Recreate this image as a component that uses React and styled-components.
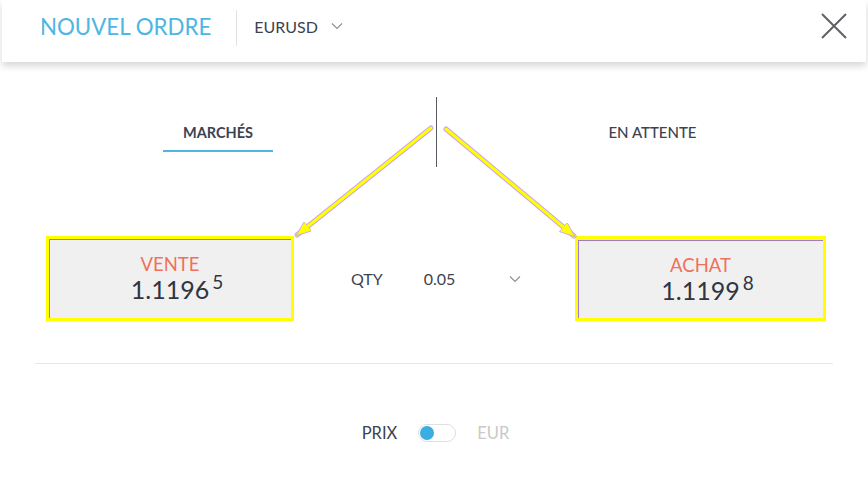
import styled, { createGlobalStyle } from "styled-components";

const GlobalStyle = createGlobalStyle`
  body {
    margin: 0;
    background: #ffffff;
    font-family: Lato, "Open Sans", sans-serif;
  }
`

const Page = styled.div`
  position: relative;
  width: 868px;
  height: 500px;
  overflow: hidden;
  background: #ffffff;
`

const Header = styled.div`
  display: flex;
  align-items: center;
  height: 62px;
  box-sizing: border-box;
  padding: 0 0 10px 38px;
  margin: 0 2px;
  background: #ffffff;
  box-shadow: 0 4px 7px rgba(0, 0, 0, 0.16);
  position: relative;
  z-index: 1;
`

const Title = styled.div`
  font-size: 22.3px;
  color: #4db6e2;
`

const HeaderSep = styled.div`
  width: 1px;
  height: 36px;
  background: #e2e2e2;
  margin: 4px 17px 0 25px;
`

const Symbol = styled.div`
  display: flex;
  align-items: center;
  gap: 13px;
  font-size: 16px;
  color: #3d4250;
`

const CloseBtn = styled.div`
  margin-left: auto;
  margin-right: 18px;
  display: flex;
`

const Tabs = styled.div`
  display: grid;
  grid-template-columns: 436px 1px 1fr;
  height: 70px;
  margin-top: 35px;
`

const TabCol = styled.div`
  display: flex;
  justify-content: center;
  align-items: flex-start;
  padding-top: 27px;
`

const Tab = styled.div`
  width: 110px;
  text-align: center;
  font-size: ${(p) => (p.$active ? 14.5 : 15)}px;
  line-height: 17px;
  font-weight: ${(p) => (p.$active ? 700 : 500)};
  color: #3d4250;
  padding-bottom: 9px;
  border-bottom: 2px solid ${(p) => (p.$active ? "#4db6e2" : "transparent")};
`

const TabDivider = styled.div`
  background: #555a63;
`

const TradeRow = styled.div`
  display: grid;
  grid-template-columns: 248px 1fr 251px;
  margin-top: 69px;
  padding: 0 42px 0 46px;
`

const PriceBox = styled.div`
  height: 85px;
  box-sizing: border-box;
  border: 3px solid #ffff00;
  border-top-width: ${(p) => p.$top}px;
  background: #f0f0f0;
  box-shadow: inset 1px 1px 0 #9d7bdc;
  display: flex;
  flex-direction: column;
  align-items: center;
  justify-content: center;
`

const Side = styled.div`
  font-size: 18.5px;
  line-height: 21px;
  color: #f0715a;
`

const Price = styled.div`
  position: relative;
  font-size: 25px;
  line-height: 27px;
  color: #2f3542;
  margin-top: 1px;
`

const Pip = styled.span`
  position: absolute;
  left: 100%;
  top: -5px;
  margin-left: 3px;
  font-size: 19px;
  line-height: 22px;
`

const Qty = styled.div`
  display: flex;
  align-items: center;
  padding-left: 57px;
  font-size: 16px;
  color: #3d4250;
`

const QtyValue = styled.span`
  margin-left: 41px;
`

const QtyChevron = styled.span`
  display: flex;
  margin-left: 54px;
`

const Divider = styled.div`
  height: 1px;
  background: #e6e6e6;
  margin: 42px 35px 0;
`

const ToggleRow = styled.div`
  display: flex;
  justify-content: center;
  align-items: center;
  gap: 21px;
  margin-top: 59px;
  padding-left: 3px;
  font-size: 16.5px;
`

const Label = styled.span`
  color: ${(p) => (p.$muted ? "#c9c9c9" : "#3d4250")};
`

const Switch = styled.div`
  width: 38px;
  height: 18px;
  box-sizing: border-box;
  border: 1px solid #e0e0e0;
  border-radius: 9px;
  background: #ffffff;
  display: flex;
  align-items: center;
  padding-left: 1px;
`

const Knob = styled.div`
  width: 14px;
  height: 14px;
  border-radius: 50%;
  background: #3aaee0;
`

const Overlay = styled.svg`
  position: absolute;
  left: 0;
  top: 0;
  pointer-events: none;
`

const Chevron = ({ color = "#8a8f98" }) => (
  <svg width="12" height="8" viewBox="0 0 12 8">
    <path d="M1 1.5 L6 6.5 L11 1.5" fill="none" stroke={color} strokeWidth="1.1" />
  </svg>
)

const Arrows = () => (
  <Overlay width="868" height="500" viewBox="0 0 868 500">
    <defs>
      <marker id="head" markerWidth="16" markerHeight="12" refX="14" refY="6" orient="auto" markerUnits="userSpaceOnUse">
        <path d="M0 0 L15 6 L0 12 Z" fill="#ffff00" stroke="#c9a2f0" strokeWidth="0.8" />
      </marker>
    </defs>
    <line x1="431" y1="128" x2="297" y2="235" stroke="#c9a2f0" strokeWidth="5" strokeLinecap="round" />
    <line x1="431" y1="128" x2="297" y2="235" stroke="#ffff00" strokeWidth="3" strokeLinecap="round" markerEnd="url(#head)" />
    <line x1="446" y1="129" x2="574" y2="236" stroke="#c9a2f0" strokeWidth="5" strokeLinecap="round" />
    <line x1="446" y1="129" x2="574" y2="236" stroke="#ffff00" strokeWidth="3" strokeLinecap="round" markerEnd="url(#head)" />
  </Overlay>
)

const App = () => {
  return (
    <Page>
      <GlobalStyle />
      <Header>
        <Title>NOUVEL ORDRE</Title>
        <HeaderSep />
        <Symbol>
          EURUSD
          <Chevron />
        </Symbol>
        <CloseBtn>
          <svg width="28" height="28" viewBox="0 0 28 28">
            <path d="M2 2 L26 26 M26 2 L2 26" stroke="#5f6166" strokeWidth="2" fill="none" />
          </svg>
        </CloseBtn>
      </Header>

      <Tabs>
        <TabCol>
          <Tab $active>MARCHÉS</Tab>
        </TabCol>
        <TabDivider />
        <TabCol>
          <Tab>EN ATTENTE</Tab>
        </TabCol>
      </Tabs>

      <TradeRow>
        <PriceBox $top={3}>
          <Side>VENTE</Side>
          <Price>
            1.1196<Pip>5</Pip>
          </Price>
        </PriceBox>
        <Qty>
          QTY
          <QtyValue>0.05</QtyValue>
          <QtyChevron>
            <Chevron />
          </QtyChevron>
        </Qty>
        <PriceBox $top={4}>
          <Side>ACHAT</Side>
          <Price>
            1.1199<Pip>8</Pip>
          </Price>
        </PriceBox>
      </TradeRow>

      <Divider />

      <ToggleRow>
        <Label>PRIX</Label>
        <Switch>
          <Knob />
        </Switch>
        <Label $muted>EUR</Label>
      </ToggleRow>

      <Arrows />
    </Page>
  );
};

export default App;
